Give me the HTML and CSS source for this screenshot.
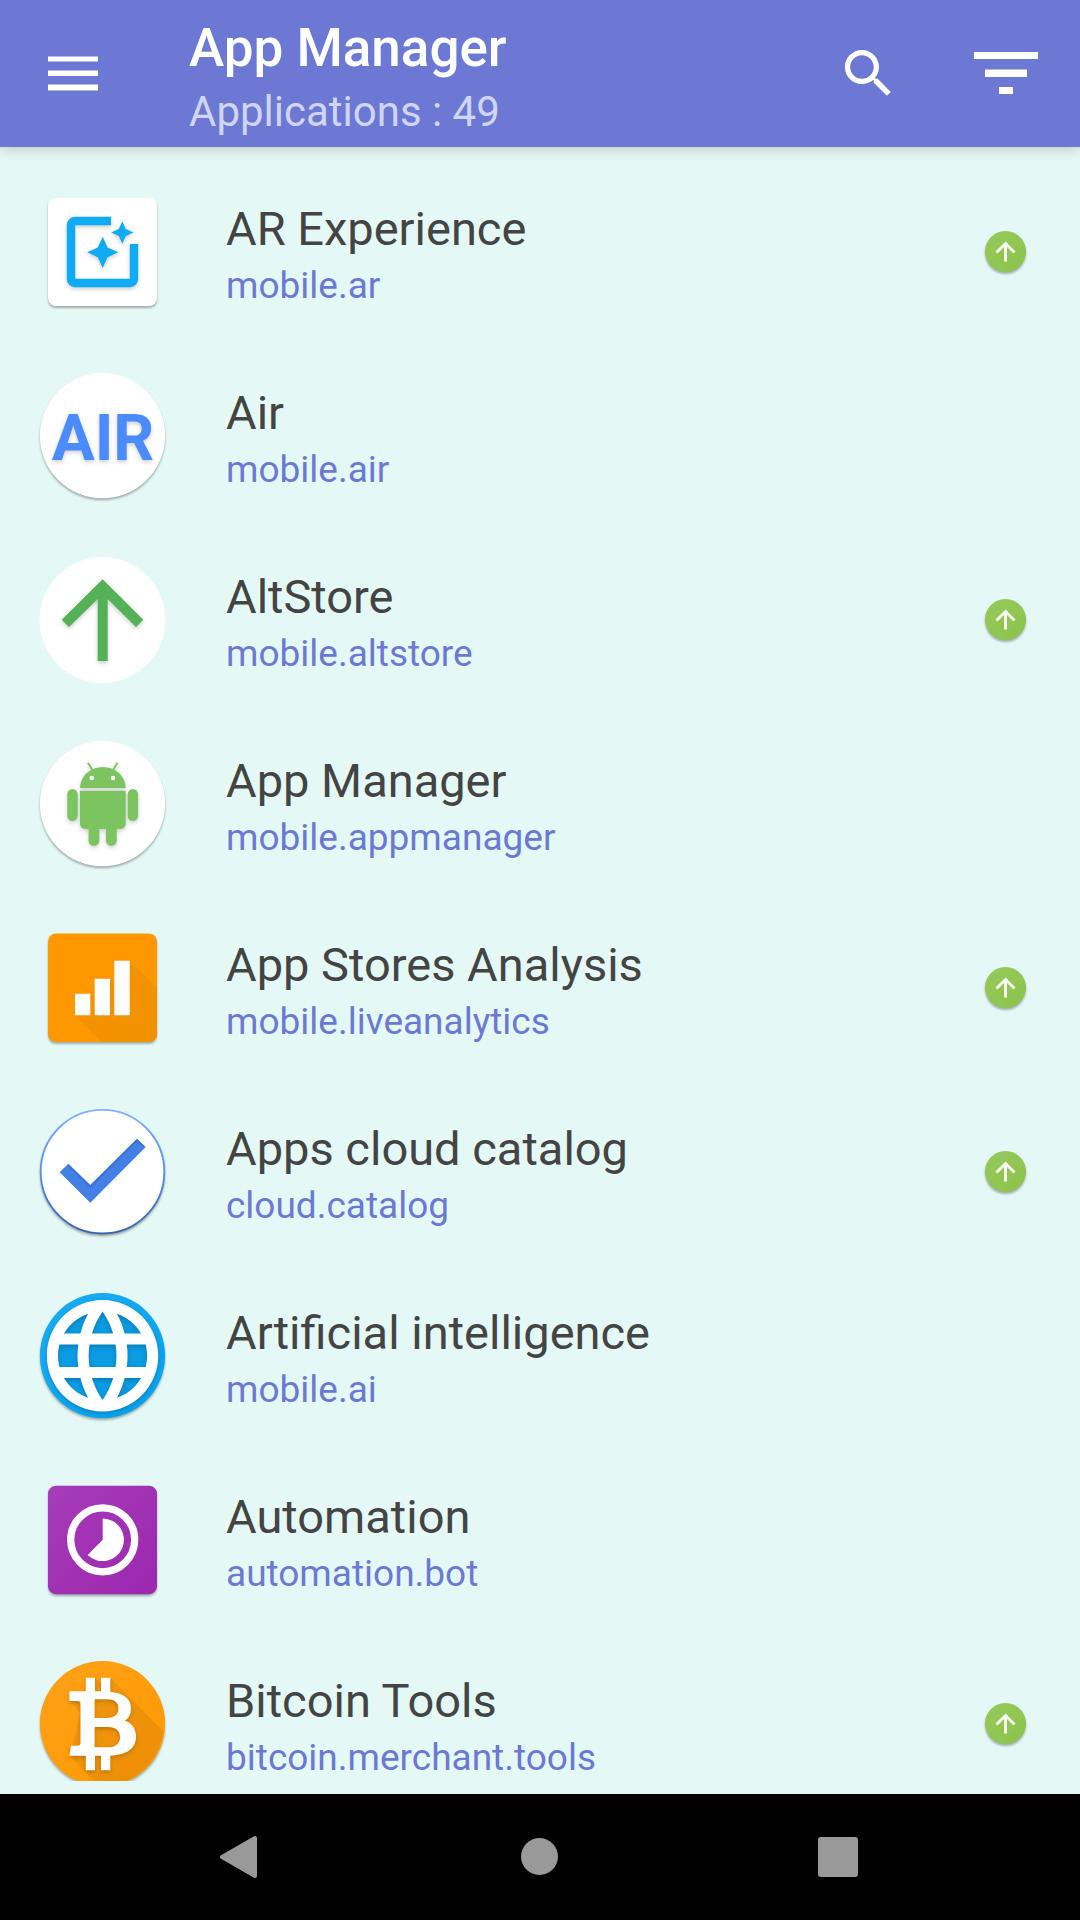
FILE: index.html
```html
<!DOCTYPE html>
<html lang="en">
<head>
<meta charset="utf-8">
<meta name="viewport" content="width=device-width, initial-scale=1">
<title>App Manager</title>
<link rel="stylesheet" href="styles.css">
</head>
<body>
<svg class="defs" aria-hidden="true">
  <defs>
    <linearGradient id="gloss" x1="0" y1="0" x2="1" y2="1">
      <stop offset="0" stop-color="#fff" stop-opacity=".1"/>
      <stop offset="1" stop-color="#fff" stop-opacity="0"/>
    </linearGradient>
    <linearGradient id="rim" x1="0" y1="0" x2="0" y2="1">
      <stop offset="0" stop-color="#7fb0ff"/>
      <stop offset=".5" stop-color="#5a8df0"/>
      <stop offset="1" stop-color="#3560ad"/>
    </linearGradient>
    <symbol id="update" viewBox="0 0 48 48">
      <circle class="plate" cx="23.500" cy="23.500" r="20.500" fill="#8bc34a"/>
      <circle cx="23.500" cy="23.500" r="20.500" fill="url(#gloss)"/>
      <path d="M23.500 33.500V15.500M14.500 24.500l9-9 9 9" fill="none" stroke="#fff" stroke-width="2.800"/>
    </symbol>
  </defs>
</svg>

<header class="bar">
  <button class="tool" type="button" aria-label="Open menu">
    <svg width="50" height="50" viewBox="0 0 50 50"><path fill="#fff" d="M0 7.500h50v5H0zM0 21.500h50v5.500H0zM0 35.500h50v6H0z"/></svg>
  </button>
  <div class="heading">
    <h1 class="heading-title">App Manager</h1>
    <p class="heading-count">Applications : 49</p>
  </div>
  <div class="actions">
    <button class="tool" type="button" aria-label="Search">
      <svg width="63" height="63" viewBox="0 0 24 24"><path fill="#fff" d="M15.5 14h-.79l-.28-.27C15.41 12.59 16 11.11 16 9.5 16 5.91 13.09 3 9.5 3S3 5.91 3 9.5 5.91 16 9.5 16c1.61 0 3.09-.59 4.23-1.57l.27.28v.79l5 4.99L20.49 19l-4.99-5zm-6 0C7.01 14 5 11.99 5 9.5S7.01 5 9.5 5 14 7.01 14 9.5 11.99 14 9.5 14z"/></svg>
    </button>
    <button class="tool" type="button" aria-label="Filter">
      <svg width="64" height="64" viewBox="0 0 64 64"><path fill="#fff" d="M0 10h64v7H0zM11 27.500h42v7.500H11zM25 45h14v7H25z"/></svg>
    </button>
  </div>
</header>

<main class="list-area">
  <ul class="list">
    <li><a class="app" href="#mobile.ar">
      <svg class="app-icon" viewBox="0 0 144 144" aria-hidden="true">
        <rect class="plate" x="18" y="18" width="109" height="108" rx="8" fill="#fff"/>
        <g class="glyph" fill="#0fabf5">
          <path d="M81 41H45a4 4 0 0 0-4 4v54a4 4 0 0 0 4 4h55a4 4 0 0 0 4-4V64" fill="none" stroke="#0fabf5" stroke-width="8.4"/>
          <path d="M72.7 56.7l4.9 10.700 10.700 4.900-10.700 4.900-4.900 10.700-4.900-10.700-10.700-4.900 10.700-4.900zM92.300 41.300l3.500 7.700 7.700 3.500-7.700 3.500-3.500 7.700-3.500-7.700-7.700-3.500 7.700-3.500z"/>
        </g>
      </svg>
      <span class="app-text"><span class="app-name">AR Experience</span><span class="app-id">mobile.ar</span></span>
      <svg class="update" role="img" aria-label="Update available"><use href="#update"/></svg>
    </a></li>

    <li><a class="app" href="#mobile.air">
      <svg class="app-icon" viewBox="0 0 144 144" aria-hidden="true">
        <circle class="plate" cx="72.5" cy="71.7" r="62.6" fill="#fff"/>
        <text class="glyph air" x="73" y="95.500" text-anchor="middle">AIR</text>
      </svg>
      <span class="app-text"><span class="app-name">Air</span><span class="app-id">mobile.air</span></span>
    </a></li>

    <li><a class="app" href="#mobile.altstore">
      <svg class="app-icon" viewBox="0 0 144 144" aria-hidden="true">
        <circle cx="72.5" cy="72" r="63" fill="#fff"/>
        <path class="glyph" fill="#53b157" d="M72.6 31.3L113.3 71.7 106 79 77.7 51v62h-10V51L39 79l-7.3-7.3z"/>
      </svg>
      <span class="app-text"><span class="app-name">AltStore</span><span class="app-id">mobile.altstore</span></span>
      <svg class="update" role="img" aria-label="Update available"><use href="#update"/></svg>
    </a></li>

    <li><a class="app" href="#mobile.appmanager">
      <svg class="app-icon" viewBox="0 0 144 144" aria-hidden="true">
        <circle class="plate" cx="72.5" cy="71.7" r="62.6" fill="#fff"/>
        <g class="glyph" fill="#7cc460">
          <path d="M50 56a22.8 21 0 0 1 45.700 0z"/>
          <path d="M58 30.700l4.500 7.500M87.500 30.700L83 38.200" stroke="#7cc460" stroke-width="2"/>
          <path d="M50 58.700h45.700V92a5 5 0 0 1-5 5h-4v11.500a5.300 5.300 0 0 1-10.700 0V97h-6.700v11.500a5.300 5.300 0 0 1-10.700 0V97H55a5 5 0 0 1-5-5z"/>
          <rect x="37.300" y="57" width="10.400" height="32" rx="5.200"/>
          <rect x="97.700" y="57" width="10.400" height="32" rx="5.200"/>
          <circle cx="61.700" cy="46" r="2.300" fill="#fff"/><circle cx="83" cy="46" r="2.300" fill="#fff"/>
        </g>
      </svg>
      <span class="app-text"><span class="app-name">App Manager</span><span class="app-id">mobile.appmanager</span></span>
    </a></li>

    <li><a class="app" href="#mobile.liveanalytics">
      <svg class="app-icon" viewBox="0 0 144 144" aria-hidden="true">
        <rect class="plate" x="18" y="17.500" width="109" height="108.500" rx="8" fill="#ff9800"/>
        <path fill="#f39200" d="M99.700 44.700L127 72v46a8 8 0 0 1-8 8H71.500L45 99.300l15.300-21.600 4.400 4.400V62.700L80 62.700l4.300 4.300z"/>
        <path fill="#fff" d="M45 77.700h15.300v21.600H45zM64.700 62.700H80v36.600H64.700zM84.300 44.700h15.400v54.600H84.300z"/>
      </svg>
      <span class="app-text"><span class="app-name">App Stores Analysis</span><span class="app-id">mobile.liveanalytics</span></span>
      <svg class="update" role="img" aria-label="Update available"><use href="#update"/></svg>
    </a></li>

    <li><a class="app" href="#cloud.catalog">
      <svg class="app-icon" viewBox="0 0 144 144" aria-hidden="true">
        <circle class="plate" cx="72.500" cy="71.700" r="61.800" fill="#fff" stroke="url(#rim)" stroke-width="1.800"/>
        <path fill="#437fe4" d="M38.300 63.700l-8.600 8.600 30.600 30.400L115.700 47l-8.700-8.300L60.300 85z"/>
        <path fill="none" stroke="#2e5cae" stroke-opacity=".35" stroke-width="2" d="M38.300 65.200l22 21.300L107 40.200l7 6.700"/>
      </svg>
      <span class="app-text"><span class="app-name">Apps cloud catalog</span><span class="app-id">cloud.catalog</span></span>
      <svg class="update" role="img" aria-label="Update available"><use href="#update"/></svg>
    </a></li>

    <li><a class="app" href="#mobile.ai">
      <svg class="app-icon" viewBox="0 0 144 144" aria-hidden="true">
        <circle class="plate" cx="72.500" cy="71.700" r="62.600" fill="#03a3f0"/>
        <circle cx="72.500" cy="71.700" r="62.600" fill="url(#gloss)"/>
        <circle cx="72.500" cy="71.700" r="50" fill="#0a9be2"/>
        <g class="glyph">
          <path fill="#fff" transform="translate(5.700 4.900) scale(5.570)" d="M11.990 2C6.470 2 2 6.480 2 12s4.470 10 9.990 10C17.520 22 22 17.520 22 12S17.520 2 11.990 2zm6.930 6h-2.950c-.32-1.250-.78-2.450-1.380-3.560 1.840.63 3.370 1.910 4.330 3.560zM12 4.040c.83 1.200 1.480 2.530 1.910 3.960h-3.820c.43-1.430 1.080-2.760 1.910-3.960zM4.260 14C4.100 13.360 4 12.690 4 12s.1-1.360.26-2h3.380c-.08.66-.14 1.320-.14 2 0 .68.06 1.340.14 2H4.260zm.82 2h2.950c.32 1.250.78 2.450 1.380 3.560-1.840-.63-3.370-1.900-4.330-3.560zm2.950-8H5.080c.96-1.660 2.490-2.930 4.330-3.560C8.810 5.550 8.350 6.750 8.030 8zM12 19.960c-.83-1.200-1.480-2.530-1.910-3.960h3.820c-.43 1.430-1.080 2.760-1.910 3.960zM14.340 14H9.660c-.09-.66-.16-1.320-.16-2 0-.68.07-1.350.16-2h4.680c.09.65.16 1.320.16 2 0 .68-.07 1.340-.16 2zm.25 5.560c.6-1.110 1.060-2.310 1.380-3.560h2.950c-.96 1.650-2.490 2.930-4.330 3.560zM16.360 14c.08-.66.14-1.320.14-2 0-.68-.06-1.340-.14-2h3.380c.16.64.26 1.310.26 2s-.1 1.360-.26 2h-3.380z"/>
        </g>
      </svg>
      <span class="app-text"><span class="app-name">Artificial intelligence</span><span class="app-id">mobile.ai</span></span>
    </a></li>

    <li><a class="app" href="#automation.bot">
      <svg class="app-icon" viewBox="0 0 144 144" aria-hidden="true">
        <rect class="plate" x="18" y="17.700" width="109" height="108.500" rx="8" fill="#9c27b0"/>
        <rect x="18" y="17.700" width="109" height="108.500" rx="8" fill="url(#gloss)"/>
        <circle cx="72.700" cy="71.800" r="32" fill="none" stroke="#fff" stroke-width="7.300"/>
        <path fill="#fff" d="M72.700 71.800V50.500a21.300 21.300 0 1 1-15.100 36.400z"/>
      </svg>
      <span class="app-text"><span class="app-name">Automation</span><span class="app-id">automation.bot</span></span>
    </a></li>

    <li><a class="app" href="#bitcoin.merchant.tools">
      <svg class="app-icon" viewBox="0 0 144 144" aria-hidden="true">
        <circle class="plate" cx="72.500" cy="71.700" r="62.600" fill="#ff9800"/>
        <path fill="#ee8e00" d="M80.300 25.700L133 79a62.600 62.600 0 0 1-64 55.200L40 103.700l10.500-43L39.400 49 65 39.300V25.700l6 6z"/>
        <circle cx="72.500" cy="71.700" r="62.600" fill="url(#gloss)"/>
        <path class="glyph" fill="#fff" fill-rule="evenodd" d="M55.800 25.700H65v13.600h6V25.700h9.300v14C93 41 101 46.500 101 56c0 6-2 10-6 12.700 7 2.300 11 8 11 16 0 11-8 18-25.700 19v14.600H71v-14.600h-6v14.600h-9.200v-14.600H39.400l1.600-10h6.500c2 0 3-1 3-3V52c0-2-1-3-3-3h-8.100v-9.700h16.400zM64.600 47.300V66H77c7.500 0 11.400-3.500 11.400-9.500S84.500 47.300 77 47.300zM64.600 75v20.300H78c8 0 12-4 12-10.100S86 75 78 75z"/>
      </svg>
      <span class="app-text"><span class="app-name">Bitcoin Tools</span><span class="app-id">bitcoin.merchant.tools</span></span>
      <svg class="update" role="img" aria-label="Update available"><use href="#update"/></svg>
    </a></li>
  </ul>
</main>

<nav class="system" aria-label="System">
  <button class="key" type="button" aria-label="Back"><svg width="48" height="48" viewBox="0 0 48 48"><path fill="#999" stroke="#999" stroke-width="4" stroke-linejoin="round" d="M4 24L37 5v38z"/></svg></button>
  <button class="key" type="button" aria-label="Home"><svg width="48" height="48" viewBox="0 0 48 48"><circle cx="23.500" cy="23.500" r="18.500" fill="#999"/></svg></button>
  <button class="key" type="button" aria-label="Recent apps"><svg width="48" height="48" viewBox="0 0 48 48"><rect x="4" y="4" width="40" height="40" rx="3" fill="#999"/></svg></button>
</nav>
</body>
</html>
```
FILE: styles.css
```css
* {
  box-sizing: border-box;
}

body {
  margin: 0;
  height: 100vh;
  display: flex;
  flex-direction: column;
  background: #e4f9f6;
  color: #444;
  font-family: Roboto, "Liberation Sans", sans-serif;
}

.defs {
  position: absolute;
  width: 0;
  height: 0;
}

button {
  margin: 0;
  padding: 0;
  border: 0;
  background: none;
  cursor: pointer;
}

svg {
  display: block;
}

.bar {
  flex: none;
  display: flex;
  align-items: center;
  height: 147px;
  padding: 0 42px 0 48px;
  background: #6b79d4;
  box-shadow: 0 2px 12px rgba(0, 0, 0, .2);
}

.heading {
  flex: 1;
  display: flex;
  flex-direction: column;
  gap: 1px;
  padding: 9px 0 0 91px;
}

.heading-title,
.heading-count {
  margin: 0;
  white-space: nowrap;
}

.heading-title {
  color: #fff;
  font-size: 53px;
  font-weight: 500;
  line-height: 66px;
}

.heading-count {
  color: rgba(255, 255, 255, .7);
  font-size: 42px;
  line-height: 60px;
}

.actions {
  display: flex;
  align-items: center;
  gap: 74px;
}

.list-area {
  flex: 1;
  min-height: 0;
  padding: 13px 0;
}

.list {
  height: 100%;
  margin: 0;
  padding: 0;
  list-style: none;
  overflow: hidden;
}

.app {
  display: flex;
  align-items: center;
  height: 184px;
  padding: 0 50px 0 30px;
  color: inherit;
  text-decoration: none;
}

.app-icon {
  flex: none;
  width: 144px;
  height: 144px;
}

.app-text {
  flex: 1;
  min-width: 0;
  display: flex;
  flex-direction: column;
  gap: 1px;
  padding: 5px 0 0 52px;
  white-space: nowrap;
}

.app-name {
  font-size: 47px;
  line-height: 62px;
}

.app-id {
  color: #6b79d4;
  font-size: 37px;
  line-height: 50px;
}

.update {
  flex: none;
  width: 48px;
  height: 48px;
}

.plate {
  filter: drop-shadow(0 2px 1px rgba(0, 0, 0, .3));
}

.glyph {
  filter: drop-shadow(0 2px 2px rgba(0, 0, 0, .2));
}

.air {
  fill: #4a8cff;
  font-size: 64px;
  font-weight: 700;
}

.system {
  flex: none;
  display: flex;
  justify-content: center;
  height: 126px;
  background: #000;
}

.key {
  width: 298px;
  display: flex;
  align-items: center;
  justify-content: center;
}
```
